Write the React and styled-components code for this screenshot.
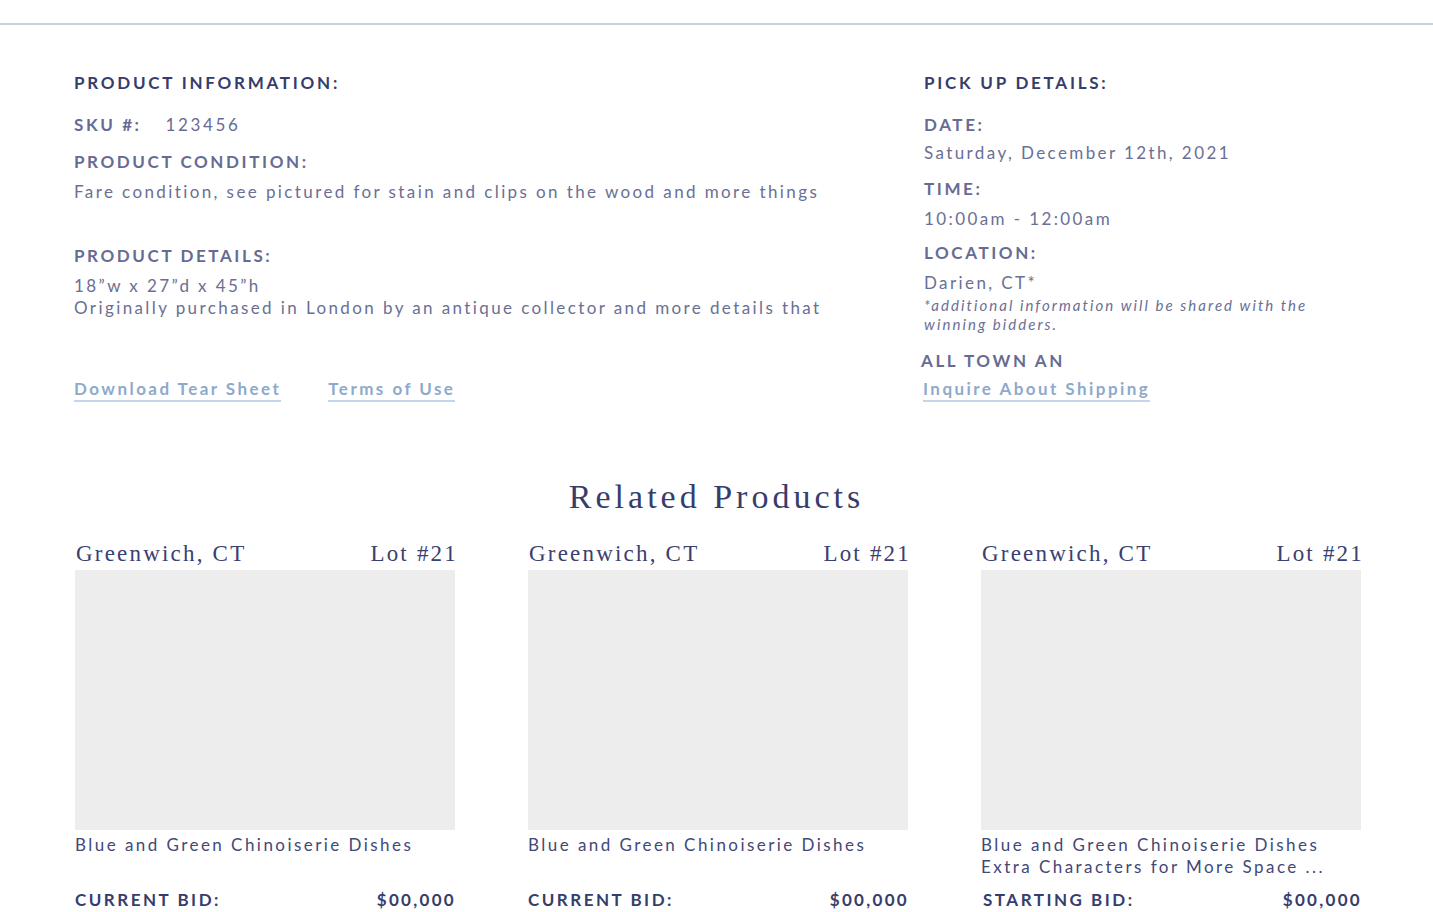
import React from "react";
import styled, { createGlobalStyle } from "styled-components";

const GlobalStyle = createGlobalStyle`
  body {
    margin: 0;
    background: #ffffff;
    font-family: "Lato", "Open Sans", sans-serif;
  }
`;

const Page = styled.div`
  width: 1433px;
  border-top: 2px solid #bed3e3;
  margin-top: 23px;
`;

const InfoGrid = styled.section`
  display: grid;
  grid-template-columns: 850px 1fr;
  padding: 47px 0 0 74px;
`;

const Column = styled.div`
  display: flex;
  flex-direction: column;
`;

const Heading = styled.h2`
  margin: 0;
  font-size: 17px;
  line-height: 22px;
  font-weight: 700;
  letter-spacing: 2.75px;
  color: #363c6b;
`;

const Label = styled.div`
  margin-top: ${(p) => p.$mt || 0}px;
  margin-left: ${(p) => p.$ml || 0}px;
  font-size: 17px;
  line-height: 22px;
  font-weight: 700;
  letter-spacing: 2.6px;
  color: #676b94;
`;

const Value = styled.span`
  font-weight: 400;
  letter-spacing: 2.6px;
  margin-left: 24px;
`;

const Text = styled.div`
  margin-top: ${(p) => p.$mt || 0}px;
  font-size: 17px;
  line-height: 22px;
  letter-spacing: 2.4px;
  color: #6a6f95;
`;

const Note = styled.div`
  margin-top: 2px;
  font-size: 15px;
  line-height: 19px;
  font-style: italic;
  letter-spacing: 2.05px;
  color: #6a6f95;
  max-width: 420px;
`;

const Links = styled.div`
  display: flex;
  gap: 47px;
  margin-top: ${(p) => p.$mt || 0}px;
  margin-left: ${(p) => p.$ml || 0}px;
`;

const Link = styled.a`
  font-size: 17px;
  line-height: 20px;
  font-weight: 700;
  letter-spacing: 2.45px;
  color: #8eaacb;
  text-decoration: none;
  border-bottom: 2px solid #c3d5e6;
  padding-bottom: 1px;
  cursor: pointer;
`;

const Related = styled.section`
  margin-top: 75px;
`;

const RelatedTitle = styled.h2`
  margin: 0;
  text-align: center;
  font-family: "Liberation Serif", "DejaVu Serif", serif;
  font-weight: 400;
  font-size: 34px;
  line-height: 40px;
  letter-spacing: 4px;
  color: #373d6b;
`;

const Cards = styled.div`
  display: grid;
  grid-template-columns: repeat(3, 380px);
  gap: 73px;
  padding: 0 0 0 75px;
  margin-top: 25px;
`;

const Card = styled.article`
  display: flex;
  flex-direction: column;
`;

const CardHead = styled.div`
  display: flex;
  justify-content: space-between;
  align-items: baseline;
  font-family: "Liberation Serif", "DejaVu Serif", serif;
  font-size: 23px;
  line-height: 24px;
  letter-spacing: 2.2px;
  color: #3a4070;
  padding: 0 0 0 1px;
  margin-right: -3px;
`;

const Photo = styled.div`
  height: 260px;
  background: #ededed;
  margin-top: 4px;
`;

const CardTitle = styled.div`
  margin-top: 4px;
  min-height: 44px;
  font-size: 17px;
  line-height: 22px;
  letter-spacing: 2.45px;
  color: #424877;
`;

const BidRow = styled.div`
  display: flex;
  justify-content: space-between;
  margin-top: 11px;
  font-size: 17px;
  line-height: 22px;
  font-weight: 700;
  letter-spacing: 2.5px;
  color: #373d6b;
  padding-left: ${(p) => p.$pl || 0}px;
`;

const Price = styled.span`
  letter-spacing: 2.3px;
  margin-right: -1px;
`;

const products = [
  { title: ["Blue and Green Chinoiserie Dishes"], bid: "CURRENT BID:" },
  { title: ["Blue and Green Chinoiserie Dishes"], bid: "CURRENT BID:" },
  {
    title: ["Blue and Green Chinoiserie Dishes", "Extra Characters for More Space ..."],
    bid: "STARTING BID:",
    pl: 2,
  },
];

export default function App() {
  return (
    <>
      <GlobalStyle />
      <Page>
        <InfoGrid>
          <Column>
            <Heading>PRODUCT INFORMATION:</Heading>
            <Label $mt={20}>
              SKU #:<Value>123456</Value>
            </Label>
            <Label $mt={15}>PRODUCT CONDITION:</Label>
            <Text $mt={8}>
              Fare condition, see pictured for stain and clips on the wood and more things
            </Text>
            <Label $mt={42}>PRODUCT DETAILS:</Label>
            <Text $mt={8}>
              18”w x 27”d x 45”h
              <br />
              Originally purchased in London by an antique collector and more details that
            </Text>
            <Links $mt={60}>
              <Link>Download Tear Sheet</Link>
              <Link>Terms of Use</Link>
            </Links>
          </Column>
          <Column>
            <Heading>PICK UP DETAILS:</Heading>
            <Label $mt={20}>DATE:</Label>
            <Text $mt={6}>Saturday, December 12th, 2021</Text>
            <Label $mt={14}>TIME:</Label>
            <Text $mt={8}>10:00am - 12:00am</Text>
            <Label $mt={12}>LOCATION:</Label>
            <Text $mt={8}>Darien, CT*</Text>
            <Note>*additional information will be shared with the winning bidders.</Note>
            <Label $mt={16} $ml={-3}>ALL TOWN AN</Label>
            <Links $mt={7} $ml={-1}>
              <Link>Inquire About Shipping</Link>
            </Links>
          </Column>
        </InfoGrid>

        <Related>
          <RelatedTitle>Related Products</RelatedTitle>
          <Cards>
            {products.map((p, i) => (
              <Card key={i}>
                <CardHead>
                  <span>Greenwich, CT</span>
                  <span>Lot #21</span>
                </CardHead>
                <Photo />
                <CardTitle>
                  {p.title.map((t) => (
                    <div key={t}>{t}</div>
                  ))}
                </CardTitle>
                <BidRow $pl={p.pl}>
                  <span>{p.bid}</span>
                  <Price>$00,000</Price>
                </BidRow>
              </Card>
            ))}
          </Cards>
        </Related>
      </Page>
    </>
  );
}
